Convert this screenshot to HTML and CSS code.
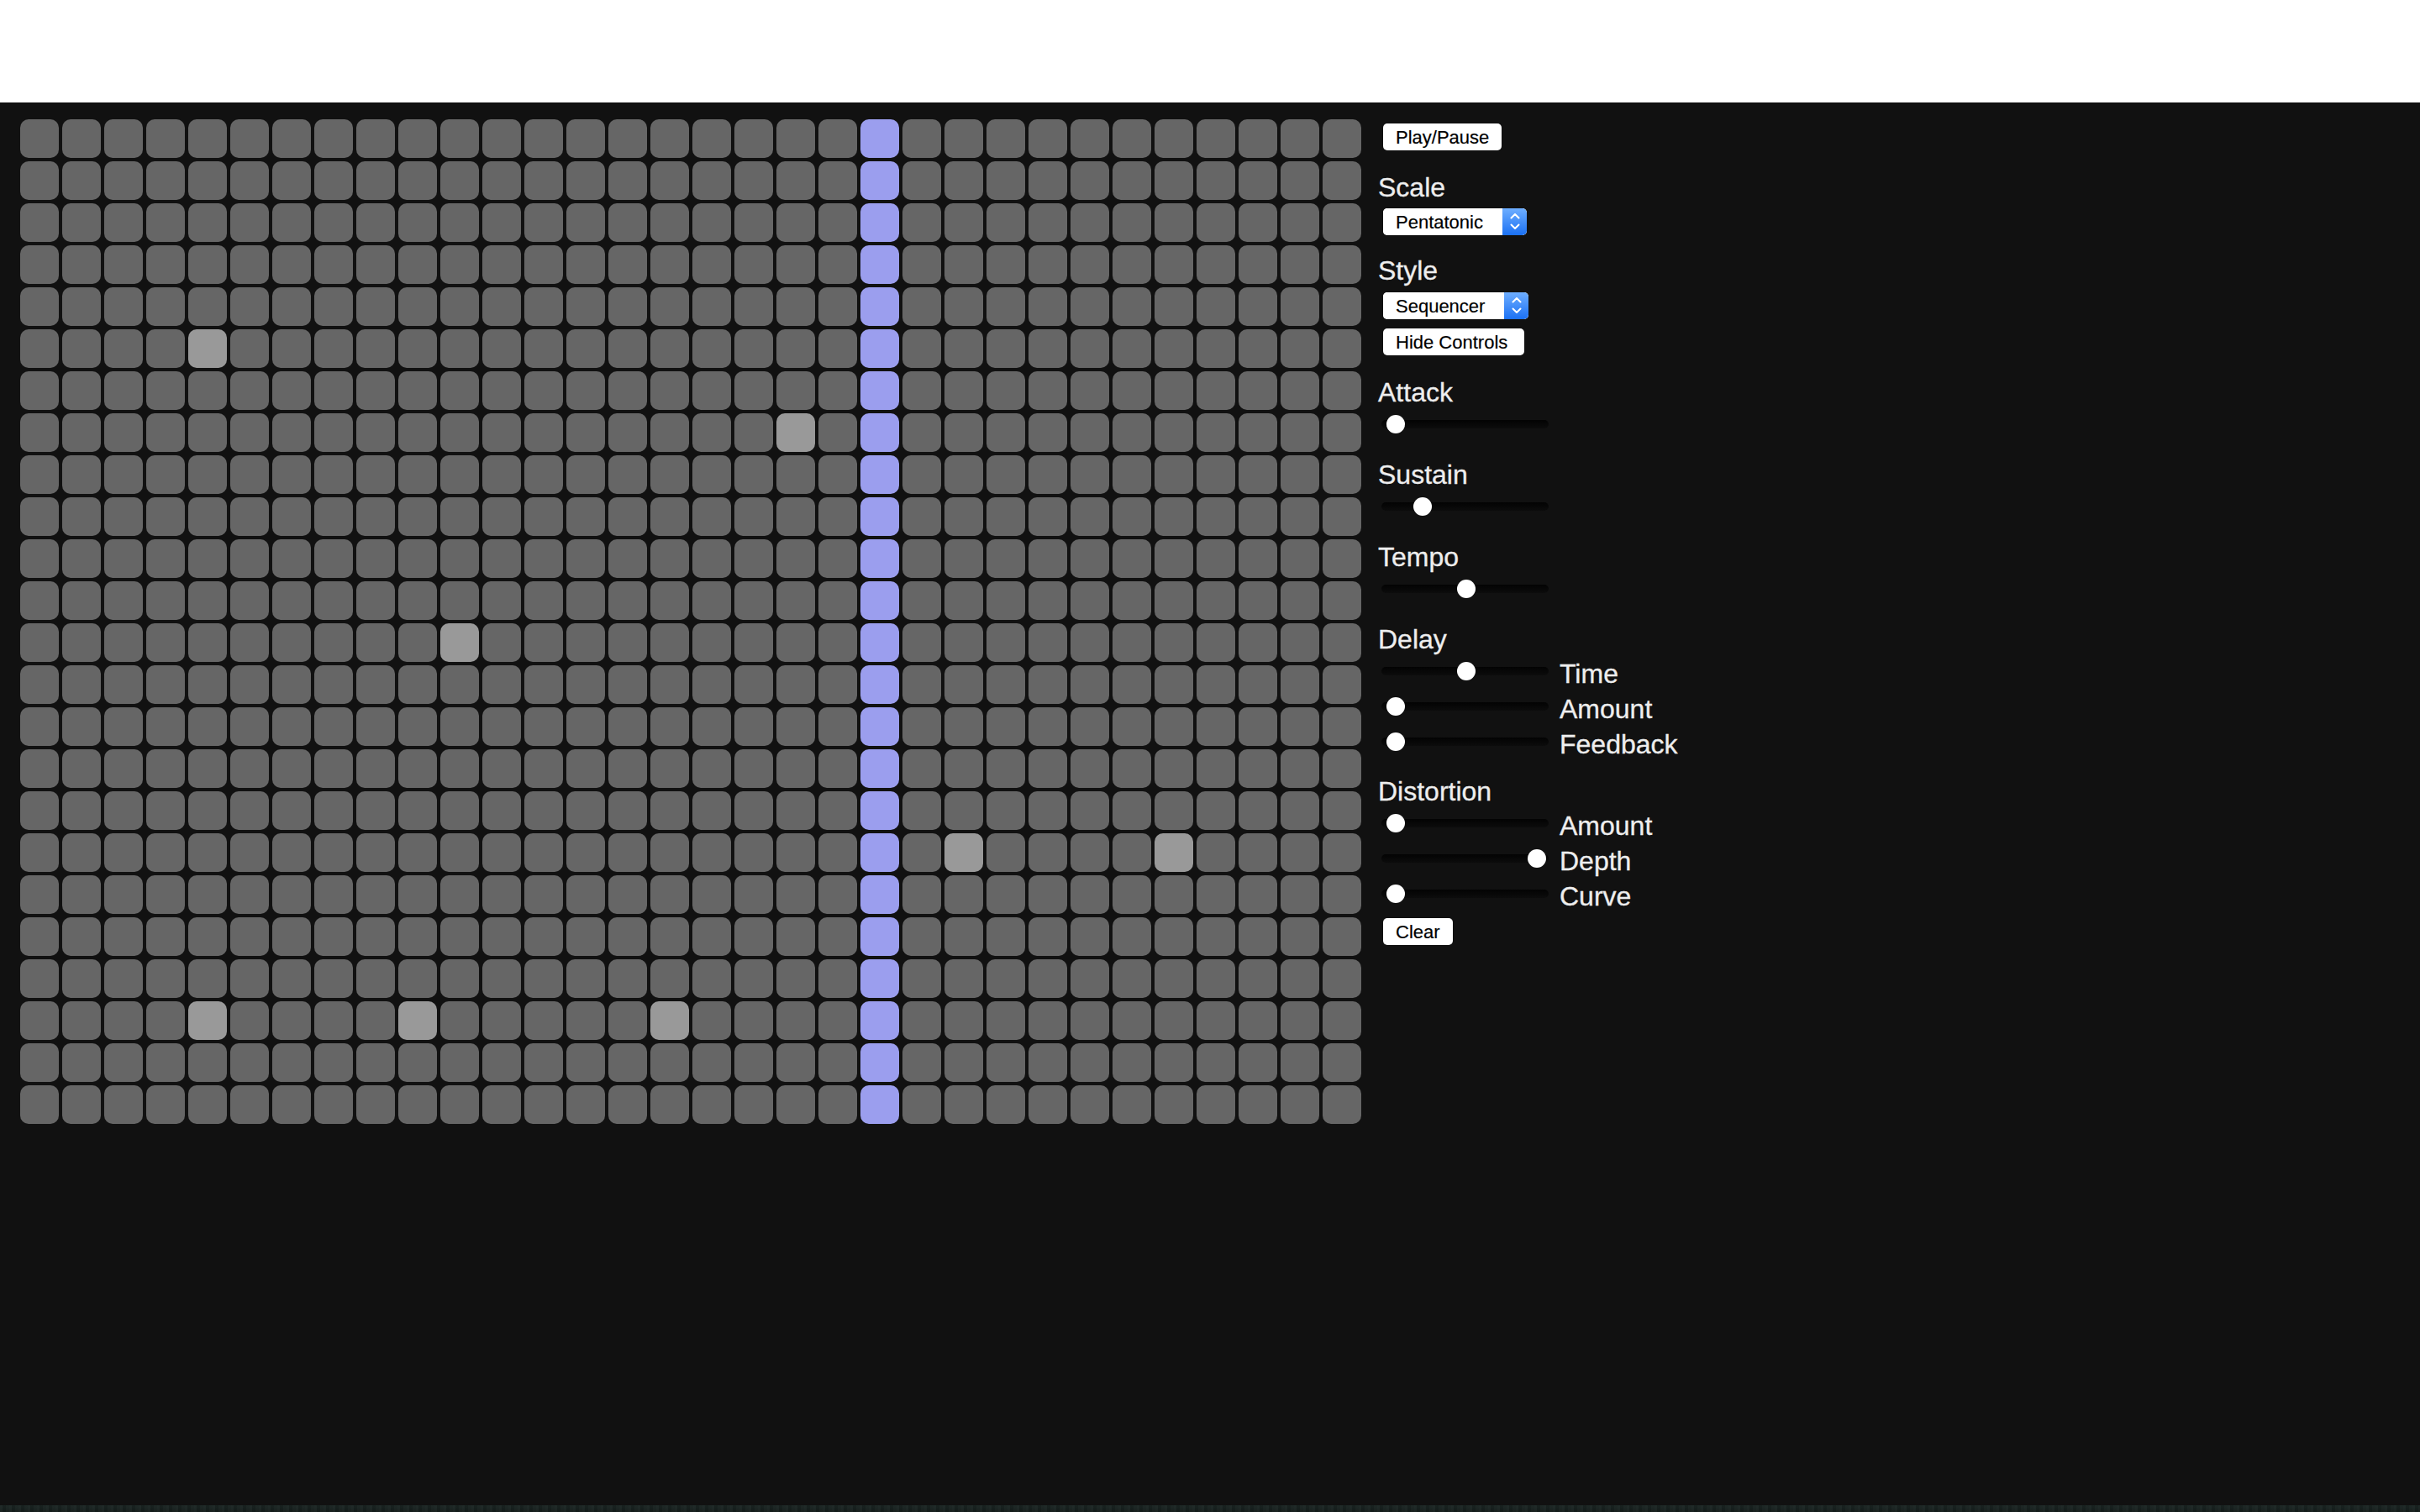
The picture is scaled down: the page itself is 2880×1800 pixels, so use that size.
FILE: index.html
```html
<!DOCTYPE html>
<html lang="en">
<head>
<meta charset="utf-8">
<title>Sequencer</title>
<link rel="stylesheet" href="styles.css">
</head>
<body>
<header class="topbar"></header>
<main class="app">
  <div class="grid">
    <div class="row">
      <div class="cell"></div><div class="cell"></div><div class="cell"></div><div class="cell"></div><div class="cell"></div><div class="cell"></div><div class="cell"></div><div class="cell"></div>
      <div class="cell"></div><div class="cell"></div><div class="cell"></div><div class="cell"></div><div class="cell"></div><div class="cell"></div><div class="cell"></div><div class="cell"></div>
      <div class="cell"></div><div class="cell"></div><div class="cell"></div><div class="cell"></div><div class="cell"></div><div class="cell"></div><div class="cell"></div><div class="cell"></div>
      <div class="cell"></div><div class="cell"></div><div class="cell"></div><div class="cell"></div><div class="cell"></div><div class="cell"></div><div class="cell"></div><div class="cell"></div>
    </div>
    <div class="row">
      <div class="cell"></div><div class="cell"></div><div class="cell"></div><div class="cell"></div><div class="cell"></div><div class="cell"></div><div class="cell"></div><div class="cell"></div>
      <div class="cell"></div><div class="cell"></div><div class="cell"></div><div class="cell"></div><div class="cell"></div><div class="cell"></div><div class="cell"></div><div class="cell"></div>
      <div class="cell"></div><div class="cell"></div><div class="cell"></div><div class="cell"></div><div class="cell"></div><div class="cell"></div><div class="cell"></div><div class="cell"></div>
      <div class="cell"></div><div class="cell"></div><div class="cell"></div><div class="cell"></div><div class="cell"></div><div class="cell"></div><div class="cell"></div><div class="cell"></div>
    </div>
    <div class="row">
      <div class="cell"></div><div class="cell"></div><div class="cell"></div><div class="cell"></div><div class="cell"></div><div class="cell"></div><div class="cell"></div><div class="cell"></div>
      <div class="cell"></div><div class="cell"></div><div class="cell"></div><div class="cell"></div><div class="cell"></div><div class="cell"></div><div class="cell"></div><div class="cell"></div>
      <div class="cell"></div><div class="cell"></div><div class="cell"></div><div class="cell"></div><div class="cell"></div><div class="cell"></div><div class="cell"></div><div class="cell"></div>
      <div class="cell"></div><div class="cell"></div><div class="cell"></div><div class="cell"></div><div class="cell"></div><div class="cell"></div><div class="cell"></div><div class="cell"></div>
    </div>
    <div class="row">
      <div class="cell"></div><div class="cell"></div><div class="cell"></div><div class="cell"></div><div class="cell"></div><div class="cell"></div><div class="cell"></div><div class="cell"></div>
      <div class="cell"></div><div class="cell"></div><div class="cell"></div><div class="cell"></div><div class="cell"></div><div class="cell"></div><div class="cell"></div><div class="cell"></div>
      <div class="cell"></div><div class="cell"></div><div class="cell"></div><div class="cell"></div><div class="cell"></div><div class="cell"></div><div class="cell"></div><div class="cell"></div>
      <div class="cell"></div><div class="cell"></div><div class="cell"></div><div class="cell"></div><div class="cell"></div><div class="cell"></div><div class="cell"></div><div class="cell"></div>
    </div>
    <div class="row">
      <div class="cell"></div><div class="cell"></div><div class="cell"></div><div class="cell"></div><div class="cell"></div><div class="cell"></div><div class="cell"></div><div class="cell"></div>
      <div class="cell"></div><div class="cell"></div><div class="cell"></div><div class="cell"></div><div class="cell"></div><div class="cell"></div><div class="cell"></div><div class="cell"></div>
      <div class="cell"></div><div class="cell"></div><div class="cell"></div><div class="cell"></div><div class="cell"></div><div class="cell"></div><div class="cell"></div><div class="cell"></div>
      <div class="cell"></div><div class="cell"></div><div class="cell"></div><div class="cell"></div><div class="cell"></div><div class="cell"></div><div class="cell"></div><div class="cell"></div>
    </div>
    <div class="row">
      <div class="cell"></div><div class="cell"></div><div class="cell"></div><div class="cell"></div><div class="cell on"></div><div class="cell"></div><div class="cell"></div><div class="cell"></div>
      <div class="cell"></div><div class="cell"></div><div class="cell"></div><div class="cell"></div><div class="cell"></div><div class="cell"></div><div class="cell"></div><div class="cell"></div>
      <div class="cell"></div><div class="cell"></div><div class="cell"></div><div class="cell"></div><div class="cell"></div><div class="cell"></div><div class="cell"></div><div class="cell"></div>
      <div class="cell"></div><div class="cell"></div><div class="cell"></div><div class="cell"></div><div class="cell"></div><div class="cell"></div><div class="cell"></div><div class="cell"></div>
    </div>
    <div class="row">
      <div class="cell"></div><div class="cell"></div><div class="cell"></div><div class="cell"></div><div class="cell"></div><div class="cell"></div><div class="cell"></div><div class="cell"></div>
      <div class="cell"></div><div class="cell"></div><div class="cell"></div><div class="cell"></div><div class="cell"></div><div class="cell"></div><div class="cell"></div><div class="cell"></div>
      <div class="cell"></div><div class="cell"></div><div class="cell"></div><div class="cell"></div><div class="cell"></div><div class="cell"></div><div class="cell"></div><div class="cell"></div>
      <div class="cell"></div><div class="cell"></div><div class="cell"></div><div class="cell"></div><div class="cell"></div><div class="cell"></div><div class="cell"></div><div class="cell"></div>
    </div>
    <div class="row">
      <div class="cell"></div><div class="cell"></div><div class="cell"></div><div class="cell"></div><div class="cell"></div><div class="cell"></div><div class="cell"></div><div class="cell"></div>
      <div class="cell"></div><div class="cell"></div><div class="cell"></div><div class="cell"></div><div class="cell"></div><div class="cell"></div><div class="cell"></div><div class="cell"></div>
      <div class="cell"></div><div class="cell"></div><div class="cell on"></div><div class="cell"></div><div class="cell"></div><div class="cell"></div><div class="cell"></div><div class="cell"></div>
      <div class="cell"></div><div class="cell"></div><div class="cell"></div><div class="cell"></div><div class="cell"></div><div class="cell"></div><div class="cell"></div><div class="cell"></div>
    </div>
    <div class="row">
      <div class="cell"></div><div class="cell"></div><div class="cell"></div><div class="cell"></div><div class="cell"></div><div class="cell"></div><div class="cell"></div><div class="cell"></div>
      <div class="cell"></div><div class="cell"></div><div class="cell"></div><div class="cell"></div><div class="cell"></div><div class="cell"></div><div class="cell"></div><div class="cell"></div>
      <div class="cell"></div><div class="cell"></div><div class="cell"></div><div class="cell"></div><div class="cell"></div><div class="cell"></div><div class="cell"></div><div class="cell"></div>
      <div class="cell"></div><div class="cell"></div><div class="cell"></div><div class="cell"></div><div class="cell"></div><div class="cell"></div><div class="cell"></div><div class="cell"></div>
    </div>
    <div class="row">
      <div class="cell"></div><div class="cell"></div><div class="cell"></div><div class="cell"></div><div class="cell"></div><div class="cell"></div><div class="cell"></div><div class="cell"></div>
      <div class="cell"></div><div class="cell"></div><div class="cell"></div><div class="cell"></div><div class="cell"></div><div class="cell"></div><div class="cell"></div><div class="cell"></div>
      <div class="cell"></div><div class="cell"></div><div class="cell"></div><div class="cell"></div><div class="cell"></div><div class="cell"></div><div class="cell"></div><div class="cell"></div>
      <div class="cell"></div><div class="cell"></div><div class="cell"></div><div class="cell"></div><div class="cell"></div><div class="cell"></div><div class="cell"></div><div class="cell"></div>
    </div>
    <div class="row">
      <div class="cell"></div><div class="cell"></div><div class="cell"></div><div class="cell"></div><div class="cell"></div><div class="cell"></div><div class="cell"></div><div class="cell"></div>
      <div class="cell"></div><div class="cell"></div><div class="cell"></div><div class="cell"></div><div class="cell"></div><div class="cell"></div><div class="cell"></div><div class="cell"></div>
      <div class="cell"></div><div class="cell"></div><div class="cell"></div><div class="cell"></div><div class="cell"></div><div class="cell"></div><div class="cell"></div><div class="cell"></div>
      <div class="cell"></div><div class="cell"></div><div class="cell"></div><div class="cell"></div><div class="cell"></div><div class="cell"></div><div class="cell"></div><div class="cell"></div>
    </div>
    <div class="row">
      <div class="cell"></div><div class="cell"></div><div class="cell"></div><div class="cell"></div><div class="cell"></div><div class="cell"></div><div class="cell"></div><div class="cell"></div>
      <div class="cell"></div><div class="cell"></div><div class="cell"></div><div class="cell"></div><div class="cell"></div><div class="cell"></div><div class="cell"></div><div class="cell"></div>
      <div class="cell"></div><div class="cell"></div><div class="cell"></div><div class="cell"></div><div class="cell"></div><div class="cell"></div><div class="cell"></div><div class="cell"></div>
      <div class="cell"></div><div class="cell"></div><div class="cell"></div><div class="cell"></div><div class="cell"></div><div class="cell"></div><div class="cell"></div><div class="cell"></div>
    </div>
    <div class="row">
      <div class="cell"></div><div class="cell"></div><div class="cell"></div><div class="cell"></div><div class="cell"></div><div class="cell"></div><div class="cell"></div><div class="cell"></div>
      <div class="cell"></div><div class="cell"></div><div class="cell on"></div><div class="cell"></div><div class="cell"></div><div class="cell"></div><div class="cell"></div><div class="cell"></div>
      <div class="cell"></div><div class="cell"></div><div class="cell"></div><div class="cell"></div><div class="cell"></div><div class="cell"></div><div class="cell"></div><div class="cell"></div>
      <div class="cell"></div><div class="cell"></div><div class="cell"></div><div class="cell"></div><div class="cell"></div><div class="cell"></div><div class="cell"></div><div class="cell"></div>
    </div>
    <div class="row">
      <div class="cell"></div><div class="cell"></div><div class="cell"></div><div class="cell"></div><div class="cell"></div><div class="cell"></div><div class="cell"></div><div class="cell"></div>
      <div class="cell"></div><div class="cell"></div><div class="cell"></div><div class="cell"></div><div class="cell"></div><div class="cell"></div><div class="cell"></div><div class="cell"></div>
      <div class="cell"></div><div class="cell"></div><div class="cell"></div><div class="cell"></div><div class="cell"></div><div class="cell"></div><div class="cell"></div><div class="cell"></div>
      <div class="cell"></div><div class="cell"></div><div class="cell"></div><div class="cell"></div><div class="cell"></div><div class="cell"></div><div class="cell"></div><div class="cell"></div>
    </div>
    <div class="row">
      <div class="cell"></div><div class="cell"></div><div class="cell"></div><div class="cell"></div><div class="cell"></div><div class="cell"></div><div class="cell"></div><div class="cell"></div>
      <div class="cell"></div><div class="cell"></div><div class="cell"></div><div class="cell"></div><div class="cell"></div><div class="cell"></div><div class="cell"></div><div class="cell"></div>
      <div class="cell"></div><div class="cell"></div><div class="cell"></div><div class="cell"></div><div class="cell"></div><div class="cell"></div><div class="cell"></div><div class="cell"></div>
      <div class="cell"></div><div class="cell"></div><div class="cell"></div><div class="cell"></div><div class="cell"></div><div class="cell"></div><div class="cell"></div><div class="cell"></div>
    </div>
    <div class="row">
      <div class="cell"></div><div class="cell"></div><div class="cell"></div><div class="cell"></div><div class="cell"></div><div class="cell"></div><div class="cell"></div><div class="cell"></div>
      <div class="cell"></div><div class="cell"></div><div class="cell"></div><div class="cell"></div><div class="cell"></div><div class="cell"></div><div class="cell"></div><div class="cell"></div>
      <div class="cell"></div><div class="cell"></div><div class="cell"></div><div class="cell"></div><div class="cell"></div><div class="cell"></div><div class="cell"></div><div class="cell"></div>
      <div class="cell"></div><div class="cell"></div><div class="cell"></div><div class="cell"></div><div class="cell"></div><div class="cell"></div><div class="cell"></div><div class="cell"></div>
    </div>
    <div class="row">
      <div class="cell"></div><div class="cell"></div><div class="cell"></div><div class="cell"></div><div class="cell"></div><div class="cell"></div><div class="cell"></div><div class="cell"></div>
      <div class="cell"></div><div class="cell"></div><div class="cell"></div><div class="cell"></div><div class="cell"></div><div class="cell"></div><div class="cell"></div><div class="cell"></div>
      <div class="cell"></div><div class="cell"></div><div class="cell"></div><div class="cell"></div><div class="cell"></div><div class="cell"></div><div class="cell"></div><div class="cell"></div>
      <div class="cell"></div><div class="cell"></div><div class="cell"></div><div class="cell"></div><div class="cell"></div><div class="cell"></div><div class="cell"></div><div class="cell"></div>
    </div>
    <div class="row">
      <div class="cell"></div><div class="cell"></div><div class="cell"></div><div class="cell"></div><div class="cell"></div><div class="cell"></div><div class="cell"></div><div class="cell"></div>
      <div class="cell"></div><div class="cell"></div><div class="cell"></div><div class="cell"></div><div class="cell"></div><div class="cell"></div><div class="cell"></div><div class="cell"></div>
      <div class="cell"></div><div class="cell"></div><div class="cell"></div><div class="cell"></div><div class="cell"></div><div class="cell"></div><div class="cell on"></div><div class="cell"></div>
      <div class="cell"></div><div class="cell"></div><div class="cell"></div><div class="cell on"></div><div class="cell"></div><div class="cell"></div><div class="cell"></div><div class="cell"></div>
    </div>
    <div class="row">
      <div class="cell"></div><div class="cell"></div><div class="cell"></div><div class="cell"></div><div class="cell"></div><div class="cell"></div><div class="cell"></div><div class="cell"></div>
      <div class="cell"></div><div class="cell"></div><div class="cell"></div><div class="cell"></div><div class="cell"></div><div class="cell"></div><div class="cell"></div><div class="cell"></div>
      <div class="cell"></div><div class="cell"></div><div class="cell"></div><div class="cell"></div><div class="cell"></div><div class="cell"></div><div class="cell"></div><div class="cell"></div>
      <div class="cell"></div><div class="cell"></div><div class="cell"></div><div class="cell"></div><div class="cell"></div><div class="cell"></div><div class="cell"></div><div class="cell"></div>
    </div>
    <div class="row">
      <div class="cell"></div><div class="cell"></div><div class="cell"></div><div class="cell"></div><div class="cell"></div><div class="cell"></div><div class="cell"></div><div class="cell"></div>
      <div class="cell"></div><div class="cell"></div><div class="cell"></div><div class="cell"></div><div class="cell"></div><div class="cell"></div><div class="cell"></div><div class="cell"></div>
      <div class="cell"></div><div class="cell"></div><div class="cell"></div><div class="cell"></div><div class="cell"></div><div class="cell"></div><div class="cell"></div><div class="cell"></div>
      <div class="cell"></div><div class="cell"></div><div class="cell"></div><div class="cell"></div><div class="cell"></div><div class="cell"></div><div class="cell"></div><div class="cell"></div>
    </div>
    <div class="row">
      <div class="cell"></div><div class="cell"></div><div class="cell"></div><div class="cell"></div><div class="cell"></div><div class="cell"></div><div class="cell"></div><div class="cell"></div>
      <div class="cell"></div><div class="cell"></div><div class="cell"></div><div class="cell"></div><div class="cell"></div><div class="cell"></div><div class="cell"></div><div class="cell"></div>
      <div class="cell"></div><div class="cell"></div><div class="cell"></div><div class="cell"></div><div class="cell"></div><div class="cell"></div><div class="cell"></div><div class="cell"></div>
      <div class="cell"></div><div class="cell"></div><div class="cell"></div><div class="cell"></div><div class="cell"></div><div class="cell"></div><div class="cell"></div><div class="cell"></div>
    </div>
    <div class="row">
      <div class="cell"></div><div class="cell"></div><div class="cell"></div><div class="cell"></div><div class="cell on"></div><div class="cell"></div><div class="cell"></div><div class="cell"></div>
      <div class="cell"></div><div class="cell on"></div><div class="cell"></div><div class="cell"></div><div class="cell"></div><div class="cell"></div><div class="cell"></div><div class="cell on"></div>
      <div class="cell"></div><div class="cell"></div><div class="cell"></div><div class="cell"></div><div class="cell"></div><div class="cell"></div><div class="cell"></div><div class="cell"></div>
      <div class="cell"></div><div class="cell"></div><div class="cell"></div><div class="cell"></div><div class="cell"></div><div class="cell"></div><div class="cell"></div><div class="cell"></div>
    </div>
    <div class="row">
      <div class="cell"></div><div class="cell"></div><div class="cell"></div><div class="cell"></div><div class="cell"></div><div class="cell"></div><div class="cell"></div><div class="cell"></div>
      <div class="cell"></div><div class="cell"></div><div class="cell"></div><div class="cell"></div><div class="cell"></div><div class="cell"></div><div class="cell"></div><div class="cell"></div>
      <div class="cell"></div><div class="cell"></div><div class="cell"></div><div class="cell"></div><div class="cell"></div><div class="cell"></div><div class="cell"></div><div class="cell"></div>
      <div class="cell"></div><div class="cell"></div><div class="cell"></div><div class="cell"></div><div class="cell"></div><div class="cell"></div><div class="cell"></div><div class="cell"></div>
    </div>
    <div class="row">
      <div class="cell"></div><div class="cell"></div><div class="cell"></div><div class="cell"></div><div class="cell"></div><div class="cell"></div><div class="cell"></div><div class="cell"></div>
      <div class="cell"></div><div class="cell"></div><div class="cell"></div><div class="cell"></div><div class="cell"></div><div class="cell"></div><div class="cell"></div><div class="cell"></div>
      <div class="cell"></div><div class="cell"></div><div class="cell"></div><div class="cell"></div><div class="cell"></div><div class="cell"></div><div class="cell"></div><div class="cell"></div>
      <div class="cell"></div><div class="cell"></div><div class="cell"></div><div class="cell"></div><div class="cell"></div><div class="cell"></div><div class="cell"></div><div class="cell"></div>
    </div>
  </div>

  <aside class="controls">
    <button class="btn btn-first" type="button">Play/Pause</button>

    <div class="heading heading-scale">Scale</div>
    <div class="select select-scale">
      <select><option>Pentatonic</option></select>
      <span class="arrow"><svg width="12" height="20" viewBox="0 0 12 20"><path d="M1.5 5.5 L6 1 L10.5 5.5" fill="none" stroke="#fff" stroke-width="2" stroke-linecap="round" stroke-linejoin="round"/><path d="M1.5 13.5 L6 18 L10.5 13.5" fill="none" stroke="#fff" stroke-width="2" stroke-linecap="round" stroke-linejoin="round"/></svg></span>
    </div>

    <div class="heading heading-style">Style</div>
    <div class="select select-style">
      <select><option>Sequencer</option></select>
      <span class="arrow"><svg width="12" height="20" viewBox="0 0 12 20"><path d="M1.5 5.5 L6 1 L10.5 5.5" fill="none" stroke="#fff" stroke-width="2" stroke-linecap="round" stroke-linejoin="round"/><path d="M1.5 13.5 L6 18 L10.5 13.5" fill="none" stroke="#fff" stroke-width="2" stroke-linecap="round" stroke-linejoin="round"/></svg></span>
    </div>
    <button class="btn btn-hide" type="button">Hide Controls</button>

    <div class="heading heading-first">Attack</div>
    <div class="srow"><input class="slider" type="range" min="0" max="100" value="0"></div>

    <div class="heading">Sustain</div>
    <div class="srow"><input class="slider" type="range" min="0" max="100" value="19"></div>

    <div class="heading">Tempo</div>
    <div class="srow"><input class="slider" type="range" min="0" max="100" value="50"></div>

    <div class="heading">Delay</div>
    <div class="srow"><input class="slider" type="range" min="0" max="100" value="50"><span class="slabel">Time</span></div>
    <div class="srow"><input class="slider" type="range" min="0" max="100" value="0"><span class="slabel">Amount</span></div>
    <div class="srow"><input class="slider" type="range" min="0" max="100" value="0"><span class="slabel">Feedback</span></div>

    <div class="heading heading-dist">Distortion</div>
    <div class="srow"><input class="slider" type="range" min="0" max="100" value="0"><span class="slabel">Amount</span></div>
    <div class="srow"><input class="slider" type="range" min="0" max="100" value="100"><span class="slabel">Depth</span></div>
    <div class="srow"><input class="slider" type="range" min="0" max="100" value="0"><span class="slabel">Curve</span></div>

    <button class="btn btn-clear" type="button">Clear</button>
  </aside>
</main>
<div class="desktop"></div>
</body>
</html>
```

FILE: styles.css
```css
html, body {
  margin: 0;
  padding: 0;
}

body {
  background: #ffffff;
  font-family: "Liberation Sans", Arial, Helvetica, sans-serif;
  width: 2880px;
  height: 1800px;
  overflow: hidden;
}

.topbar {
  height: 122px;
  background: #ffffff;
}

.app {
  display: flex;
  align-items: flex-start;
  gap: 20px;
  height: 1670px;
  box-sizing: border-box;
  padding: 20px 0 0 24px;
  background: #111111;
}

.desktop {
  height: 8px;
  background:
    repeating-linear-gradient(90deg, rgba(255,255,255,0.03) 0 3px, rgba(0,0,0,0.05) 3px 7px, rgba(255,255,255,0.02) 7px 11px),
    linear-gradient(#1a2523, #141c1a);
}

/* ---------- grid ---------- */
.grid {
  display: flex;
  flex-direction: column;
  gap: 4px;
  flex: none;
}

.row {
  display: flex;
  gap: 4px;
}

.cell {
  width: 46px;
  height: 46px;
  border-radius: 10px;
  background: #666666;
}

.cell.on {
  background: #999999;
}

.row > .cell:nth-child(21) {
  background: #9b9eee;
}

/* ---------- controls ---------- */
.controls {
  display: flex;
  flex-direction: column;
  align-items: flex-start;
  color: #eeeeee;
}

.heading {
  font-size: 32px;
  line-height: 36px;
  margin-top: 20px;
  color: #eeeeee;
  -webkit-text-stroke: 0.3px #eeeeee;
}

.heading-scale { margin-top: 26px; }
.heading-style { margin-top: 24px; }
.heading-first { margin-top: 26px; }
.heading-dist { margin-top: 19px; }

.btn {
  display: block;
  box-sizing: border-box;
  height: 32px;
  margin: 0 0 0 6px;
  padding: 1px 15px 0 15px;
  border: none;
  border-radius: 5px;
  background: #ffffff;
  color: #000000;
  font-family: "Liberation Sans", Arial, Helvetica, sans-serif;
  font-size: 22px;
  line-height: 31px;
  -webkit-text-stroke: 0.2px #000000;
}

.btn-first { margin-top: 5px; }
.btn-hide { margin-top: 11px; padding-right: 20px; }
.btn-clear { margin-top: 7px; }

.select {
  display: flex;
  height: 32px;
  margin-left: 6px;
  border-radius: 5px;
  overflow: hidden;
  background: #ffffff;
}

.select-scale { margin-top: 7px; }
.select-style { margin-top: 8px; }

.select select {
  -webkit-appearance: none;
  appearance: none;
  border: none;
  outline: none;
  margin: 0;
  height: 32px;
  padding: 1px 0 0 15px;
  background: #ffffff;
  color: #000000;
  font-family: "Liberation Sans", Arial, Helvetica, sans-serif;
  font-size: 22px;
  line-height: 31px;
  -webkit-text-stroke: 0.2px #000000;
}

.select-scale select { width: 142px; }
.select-style select { width: 144px; }

.arrow {
  width: 29px;
  height: 32px;
  display: flex;
  align-items: center;
  justify-content: center;
  background: linear-gradient(#6eaeff, #1b71f4);
  border-radius: 0 5px 5px 0;
}

/* slider rows */
.srow {
  display: flex;
  align-items: flex-start;
  height: 42px;
}

.slider {
  -webkit-appearance: none;
  appearance: none;
  box-sizing: border-box;
  width: 199px;
  height: 10px;
  margin: 15px 0 0 4px;
  padding: 0 3px 0 6px;
  border-radius: 5px;
  background: linear-gradient(#030303, #0c0c0c);
  outline: none;
}

.slider::-webkit-slider-runnable-track {
  height: 10px;
  background: transparent;
  border: none;
}

.slider::-webkit-slider-thumb {
  -webkit-appearance: none;
  appearance: none;
  width: 22px;
  height: 22px;
  margin-top: -6px;
  border: none;
  border-radius: 50%;
  background: #ffffff;
}

.slabel {
  margin: 5px 0 0 13px;
  font-size: 32px;
  line-height: 36px;
  color: #eeeeee;
  -webkit-text-stroke: 0.3px #eeeeee;
}
```
